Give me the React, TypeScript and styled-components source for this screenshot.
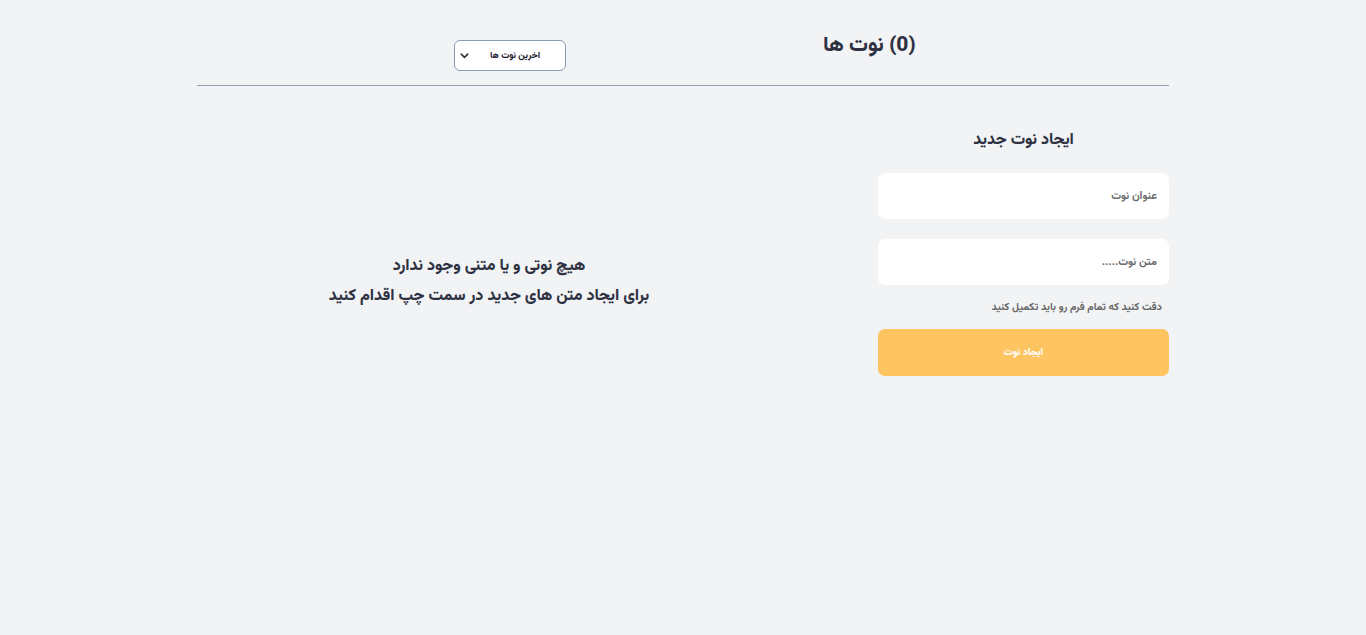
import React from "react";
import styled, { createGlobalStyle } from "styled-components";

const Global = createGlobalStyle`
  html, body { margin: 0; padding: 0; background: #f2f3f5; }
  body { font-family: "Vazirmatn", "DejaVu Sans", "Noto Sans", sans-serif; }
  * { box-sizing: border-box; }
`;

const Page = styled.div`
  width: 972px;
  margin: 0 auto;
  direction: rtl;
`;

const Header = styled.header`
  display: flex;
  align-items: flex-start;
  justify-content: center;
  gap: 257px;
  height: 86px;
  padding-top: 30px;
  padding-left: 4px;
  border-bottom: 1px solid #939eb6;
`;

const Title = styled.h1`
  margin: 0;
  font-size: 21px;
  font-weight: 800;
  line-height: 32px;
  color: #2d3142;
`;

const SelectWrap = styled.div`
  position: relative;
  width: 112px;
  height: 31px;
  margin-top: 10px;
`;

const Select = styled.select`
  appearance: none;
  width: 100%;
  height: 100%;
  border: 1px solid #8e9bb5;
  border-radius: 6px;
  background: #ffffff;
  font-family: inherit;
  font-size: 9px;
  font-weight: 800;
  color: #1f2230;
  text-align: center;
  text-align-last: center;
  direction: rtl;
  padding: 0 10px 0 20px;
  outline: none;
`;

const Chevron = styled.svg`
  position: absolute;
  left: 5px;
  top: 10px;
  pointer-events: none;
`;

const Body = styled.main`
  display: flex;
  gap: 97px;
  padding-top: 42px;
`;

const Form = styled.form`
  width: 291px;
  display: flex;
  flex-direction: column;
`;

const FormTitle = styled.h2`
  margin: 0 0 19px;
  text-align: center;
  font-size: 16px;
  font-weight: 800;
  color: #2d3142;
  line-height: 26px;
`;

const Field = styled.input`
  height: 46px;
  border: none;
  border-radius: 7px;
  background: #ffffff;
  padding: 0 12px;
  font-family: inherit;
  font-size: 11px;
  font-weight: 700;
  color: #333;
  direction: rtl;
  outline: none;
  margin-bottom: 20px;
  &::placeholder { color: #6b6b6b; }
`;

const Hint = styled.p`
  margin: -5px 0 0;
  padding-right: 7px;
  font-size: 10.5px;
  font-weight: 700;
  color: #666;
  line-height: 16px;
`;

const Submit = styled.button`
  margin-top: 13px;
  height: 47px;
  border: none;
  border-radius: 7px;
  background: #fec462;
  color: #ffffff;
  font-family: inherit;
  font-size: 10px;
  font-weight: 800;
`;

const Empty = styled.section`
  flex: 1;
  display: flex;
  flex-direction: column;
  align-items: center;
  padding-top: 124px;
`;

const EmptyLine = styled.p`
  margin: 0;
  font-size: 16px;
  font-weight: 800;
  color: #2d3142;
  line-height: 30px;
`;

export default function App() {
  return (
    <>
      <Global />
      <Page>
        <Header>
          <Title>(0) نوت ها</Title>
          <SelectWrap>
            <Select defaultValue="latest">
              <option value="latest">اخرین نوت ها</option>
              <option value="oldest">قدیمی ترین نوت ها</option>
            </Select>
            <Chevron width="11" height="11" viewBox="0 0 24 24" fill="none" stroke="#2d3142" strokeWidth="3.5" strokeLinecap="round" strokeLinejoin="round">
              <path d="M5 9l7 7 7-7" />
            </Chevron>
          </SelectWrap>
        </Header>
        <Body>
          <Form onSubmit={(e) => e.preventDefault()}>
            <FormTitle>ایجاد نوت جدید</FormTitle>
            <Field placeholder="عنوان نوت" />
            <Field placeholder="متن نوت....." />
            <Hint>دقت کنید که تمام فرم رو باید تکمیل کنید</Hint>
            <Submit type="submit">ایجاد نوت</Submit>
          </Form>
          <Empty>
            <EmptyLine>هیچ نوتی و یا متنی وجود ندارد</EmptyLine>
            <EmptyLine>برای ایجاد متن های جدید در سمت چپ اقدام کنید</EmptyLine>
          </Empty>
        </Body>
      </Page>
    </>
  );
}
